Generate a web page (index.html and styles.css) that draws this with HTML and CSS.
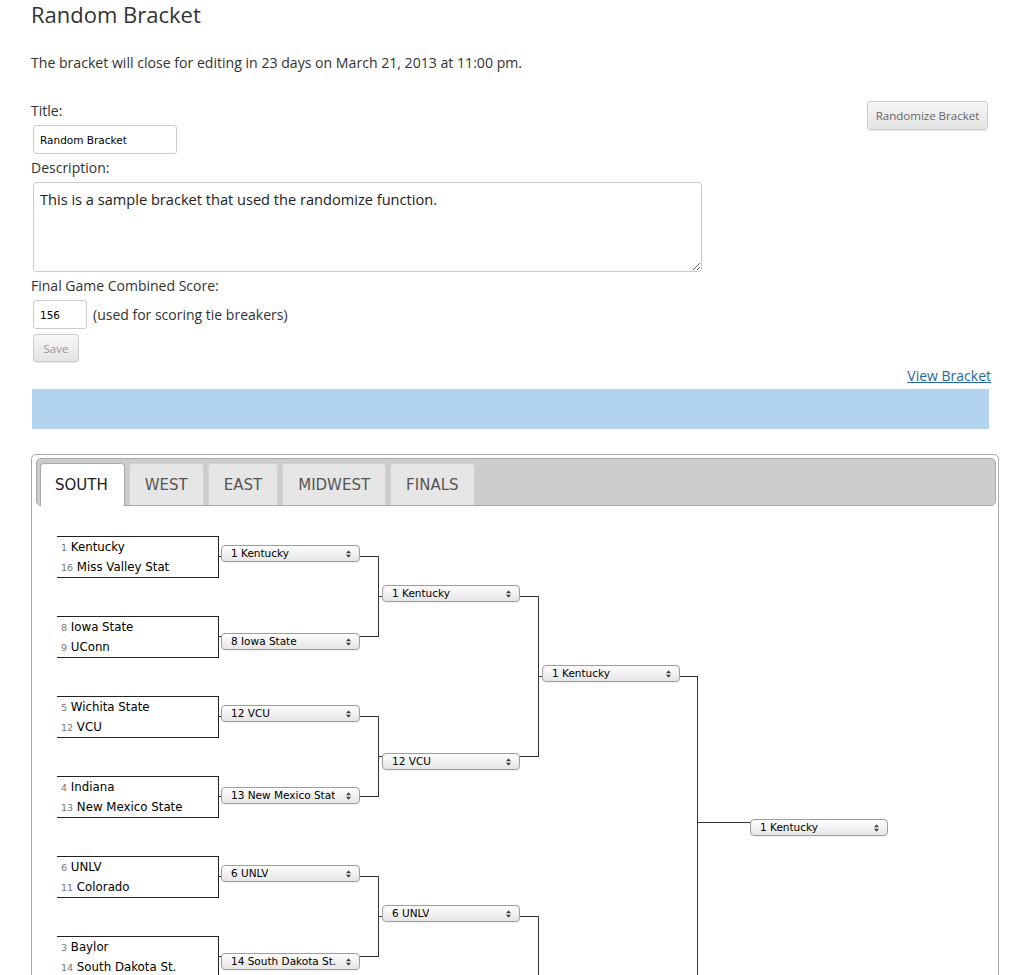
FILE: index.html
```html
<!DOCTYPE html>
<html lang="en">
<head>
<meta charset="utf-8">
<title>Random Bracket</title>
<link rel="stylesheet" href="styles.css">
</head>
<body>
<div class="page">
  <h1 class="page-title">Random Bracket</h1>
  <p class="notice">The bracket will close for editing in 23 days on March 21, 2013 at 11:00 pm.</p>

  <form class="entry">
    <div class="entry-head">
      <div class="field">
        <label class="field-label">Title:</label>
        <input class="text-input title-input" type="text" value="Random Bracket">
      </div>
      <button class="btn randomize" type="button">Randomize Bracket</button>
    </div>
    <label class="field-label gap">Description:</label>
    <textarea class="desc-input">This is a sample bracket that used the randomize function.</textarea>
    <label class="field-label gap">Final Game Combined Score:</label>
    <div class="score-row">
      <input class="text-input score-input" type="text" value="156">
      <span class="hint">(used for scoring tie breakers)</span>
    </div>
    <button class="btn save" type="button">Save</button>
  </form>

  <div class="links"><a class="view-link" href="#">View Bracket</a></div>
  <div class="info-bar"></div>

  <div class="bracket-box">
    <ul class="tabs">
      <li class="tab active">SOUTH</li>
      <li class="tab">WEST</li>
      <li class="tab">EAST</li>
      <li class="tab">MIDWEST</li>
      <li class="tab">FINALS</li>
    </ul>
    <div class="panel">
      <div class="canvas">
        <div class="matchups">
          <div class="matchup"><div class="team"><span class="seed">1</span> Kentucky</div><div class="team"><span class="seed">16</span> Miss Valley Stat</div></div>
          <div class="matchup"><div class="team"><span class="seed">8</span> Iowa State</div><div class="team"><span class="seed">9</span> UConn</div></div>
          <div class="matchup"><div class="team"><span class="seed">5</span> Wichita State</div><div class="team"><span class="seed">12</span> VCU</div></div>
          <div class="matchup"><div class="team"><span class="seed">4</span> Indiana</div><div class="team"><span class="seed">13</span> New Mexico State</div></div>
          <div class="matchup"><div class="team"><span class="seed">6</span> UNLV</div><div class="team"><span class="seed">11</span> Colorado</div></div>
          <div class="matchup"><div class="team"><span class="seed">3</span> Baylor</div><div class="team"><span class="seed">14</span> South Dakota St.</div></div>
          <div class="matchup"><div class="team"><span class="seed">7</span> Notre Dame</div><div class="team"><span class="seed">10</span> Xavier</div></div>
          <div class="matchup"><div class="team"><span class="seed">2</span> Duke</div><div class="team"><span class="seed">15</span> Lehigh</div></div>
        </div>

        <svg class="connectors" width="900" height="640" viewBox="0 0 900 640" aria-hidden="true">
          <path d="M161 20.5H321.5V100.5H161M161 180.5H321.5V260.5H161M161 340.5H321.5V420.5H161M161 500.5H321.5V580.5H161M321 60.5H481.5V220.5H321M321 380.5H481.5V540.5H321M481 140.5H640.5V460.5H481M640 286.5H700"/>
        </svg>

        <div class="pick r1" style="top:9px"><span class="pick-text">1 Kentucky</span><svg class="arrows" width="5" height="8" viewBox="0 0 5 8"><path d="M0 3.2L2.5 0.2L5 3.2ZM0 4.8L2.5 7.8L5 4.8Z"/></svg></div>
        <div class="pick r1" style="top:97px"><span class="pick-text">8 Iowa State</span><svg class="arrows" width="5" height="8" viewBox="0 0 5 8"><path d="M0 3.2L2.5 0.2L5 3.2ZM0 4.8L2.5 7.8L5 4.8Z"/></svg></div>
        <div class="pick r1" style="top:169px"><span class="pick-text">12 VCU</span><svg class="arrows" width="5" height="8" viewBox="0 0 5 8"><path d="M0 3.2L2.5 0.2L5 3.2ZM0 4.8L2.5 7.8L5 4.8Z"/></svg></div>
        <div class="pick r1" style="top:251px"><span class="pick-text">13 New Mexico Stat</span><svg class="arrows" width="5" height="8" viewBox="0 0 5 8"><path d="M0 3.2L2.5 0.2L5 3.2ZM0 4.8L2.5 7.8L5 4.8Z"/></svg></div>
        <div class="pick r1" style="top:329px"><span class="pick-text">6 UNLV</span><svg class="arrows" width="5" height="8" viewBox="0 0 5 8"><path d="M0 3.2L2.5 0.2L5 3.2ZM0 4.8L2.5 7.8L5 4.8Z"/></svg></div>
        <div class="pick r1" style="top:417px"><span class="pick-text">14 South Dakota St.</span><svg class="arrows" width="5" height="8" viewBox="0 0 5 8"><path d="M0 3.2L2.5 0.2L5 3.2ZM0 4.8L2.5 7.8L5 4.8Z"/></svg></div>
        <div class="pick r1" style="top:489px"><span class="pick-text">10 Xavier</span><svg class="arrows" width="5" height="8" viewBox="0 0 5 8"><path d="M0 3.2L2.5 0.2L5 3.2ZM0 4.8L2.5 7.8L5 4.8Z"/></svg></div>
        <div class="pick r1" style="top:577px"><span class="pick-text">2 Duke</span><svg class="arrows" width="5" height="8" viewBox="0 0 5 8"><path d="M0 3.2L2.5 0.2L5 3.2ZM0 4.8L2.5 7.8L5 4.8Z"/></svg></div>

        <div class="pick r2" style="top:49px"><span class="pick-text">1 Kentucky</span><svg class="arrows" width="5" height="8" viewBox="0 0 5 8"><path d="M0 3.2L2.5 0.2L5 3.2ZM0 4.8L2.5 7.8L5 4.8Z"/></svg></div>
        <div class="pick r2" style="top:217px"><span class="pick-text">12 VCU</span><svg class="arrows" width="5" height="8" viewBox="0 0 5 8"><path d="M0 3.2L2.5 0.2L5 3.2ZM0 4.8L2.5 7.8L5 4.8Z"/></svg></div>
        <div class="pick r2" style="top:369px"><span class="pick-text">6 UNLV</span><svg class="arrows" width="5" height="8" viewBox="0 0 5 8"><path d="M0 3.2L2.5 0.2L5 3.2ZM0 4.8L2.5 7.8L5 4.8Z"/></svg></div>
        <div class="pick r2" style="top:537px"><span class="pick-text">2 Duke</span><svg class="arrows" width="5" height="8" viewBox="0 0 5 8"><path d="M0 3.2L2.5 0.2L5 3.2ZM0 4.8L2.5 7.8L5 4.8Z"/></svg></div>

        <div class="pick r3" style="top:129px"><span class="pick-text">1 Kentucky</span><svg class="arrows" width="5" height="8" viewBox="0 0 5 8"><path d="M0 3.2L2.5 0.2L5 3.2ZM0 4.8L2.5 7.8L5 4.8Z"/></svg></div>
        <div class="pick r3" style="top:449px"><span class="pick-text">6 UNLV</span><svg class="arrows" width="5" height="8" viewBox="0 0 5 8"><path d="M0 3.2L2.5 0.2L5 3.2ZM0 4.8L2.5 7.8L5 4.8Z"/></svg></div>

        <div class="pick r4" style="top:283px"><span class="pick-text">1 Kentucky</span><svg class="arrows" width="5" height="8" viewBox="0 0 5 8"><path d="M0 3.2L2.5 0.2L5 3.2ZM0 4.8L2.5 7.8L5 4.8Z"/></svg></div>
      </div>
    </div>
  </div>
</div>
</body>
</html>
```

FILE: styles.css
```css
* { box-sizing: border-box; }

body {
  margin: 0;
  background: #fff;
  color: #333;
  font-family: "Open Sans", "Liberation Sans", sans-serif;
}

.page {
  width: 1000px;
  padding: 0 0 40px 31px;
}

.page-title {
  margin: 0;
  font-size: 22px;
  font-weight: 400;
  line-height: 29px;
}

.notice {
  margin: 24px 0 0;
  font-size: 14.1px;
  line-height: 20px;
}

.entry {
  margin-top: 28px;
  width: 958px;
  font-size: 14px;
  line-height: 20px;
}

.entry-head {
  display: flex;
  justify-content: space-between;
  align-items: flex-start;
}

.field-label { display: block; }
.field-label.gap { margin-top: 4px; }

.text-input {
  display: block;
  height: 29px;
  margin: 4px 0 0 2px;
  padding: 0 6px;
  border: 1px solid #ccc;
  border-radius: 3px;
  background: #fff;
  color: #000;
  font: 10.5px "DejaVu Sans", Verdana, sans-serif;
}

.title-input { width: 144px; }

.desc-input {
  display: block;
  width: 669px;
  height: 90px;
  margin: 4px 0 0 2px;
  padding: 6px 6px;
  border: 1px solid #ccc;
  border-radius: 3px;
  color: #222;
  font: 14.6px/20px "Open Sans", "Liberation Sans", sans-serif;
  resize: both;
}

.score-row {
  display: flex;
  align-items: center;
  gap: 6px;
  margin-top: 4px;
}

.score-row .text-input { margin-top: 0; }
.score-input { width: 54px; }

.hint { font-size: 14px; }

.btn {
  display: block;
  height: 29px;
  border: 1px solid #ccc;
  border-radius: 3px;
  background: linear-gradient(#f6f6f6, #e4e4e4);
  box-shadow: 0 1px 1px rgba(0, 0, 0, 0.08);
  font: 11.5px "Open Sans", "Liberation Sans", sans-serif;
  color: #666;
  padding: 0;
  white-space: nowrap;
}

.randomize { width: 121px; margin-right: 1px; }

.save {
  height: 28px;
  width: 46px;
  margin: 5px 0 0 2px;
  color: #999;
}

.links {
  width: 960px;
  margin-top: 4px;
  text-align: right;
  font-size: 14px;
  line-height: 20px;
}

.view-link {
  color: #1f6a9e;
  text-decoration: underline;
}

.info-bar {
  width: 957px;
  height: 40px;
  margin: 3px 0 0 1px;
  background: #b3d4ee;
}

.bracket-box {
  width: 968px;
  margin-top: 25px;
  padding: 3px 2px 20px 4px;
  border: 1px solid #aaa;
  border-radius: 5px;
}

.tabs {
  display: flex;
  align-items: flex-end;
  margin: 0;
  padding: 4px 3px 0;
  list-style: none;
  background: #ccc;
  border: 1px solid #aaa;
  border-radius: 5px;
}

.tab {
  height: 42px;
  margin-right: 4px;
  padding: 0 15px;
  border: 1px solid #d3d3d3;
  border-bottom: 0;
  border-radius: 4px 4px 0 0;
  background: #e6e6e6;
  color: #555;
  font: 15px/42px "DejaVu Sans", Verdana, sans-serif;
}

.tab.active {
  height: 43px;
  margin-bottom: -1px;
  padding-left: 14px;
  padding-right: 16px;
  background: #fff;
  border-color: #aaa;
  color: #212121;
}

.panel {
  padding: 30px 0 0 21px;
}

.canvas {
  position: relative;
  height: 640px;
}

.matchups {
  display: flex;
  flex-direction: column;
  gap: 38px;
  width: 162px;
}

.matchup {
  height: 42px;
  border-top: 1px solid #222;
  border-right: 1px solid #222;
  border-bottom: 1px solid #222;
  padding-left: 4px;
}

.team {
  height: 20px;
  font: 11.8px/20px "DejaVu Sans", Verdana, sans-serif;
  color: #000;
  white-space: nowrap;
}

.seed {
  font-size: 9.5px;
  color: #777;
}

.connectors {
  position: absolute;
  left: 0;
  top: 0;
  fill: none;
  stroke: #333;
  stroke-width: 1;
  shape-rendering: crispEdges;
}

.pick {
  position: absolute;
  display: flex;
  align-items: center;
  justify-content: space-between;
  width: 138px;
  height: 17px;
  padding: 0 8px 0 9px;
  border: 1px solid #9d9d9d;
  border-radius: 4px;
  background: linear-gradient(#fdfdfd, #e6e6e6);
  box-shadow: 0 1px 0 rgba(0, 0, 0, 0.06);
  font: 10.5px/15px "DejaVu Sans", Verdana, sans-serif;
  color: #000;
  white-space: nowrap;
}

.pick-text { overflow: hidden; }

.arrows {
  flex: none;
  margin-left: 4px;
  fill: #444;
}

.r1 { left: 164px; width: 139px; }
.r2 { left: 325px; }
.r3 { left: 485px; }
.r4 { left: 693px; }
```
